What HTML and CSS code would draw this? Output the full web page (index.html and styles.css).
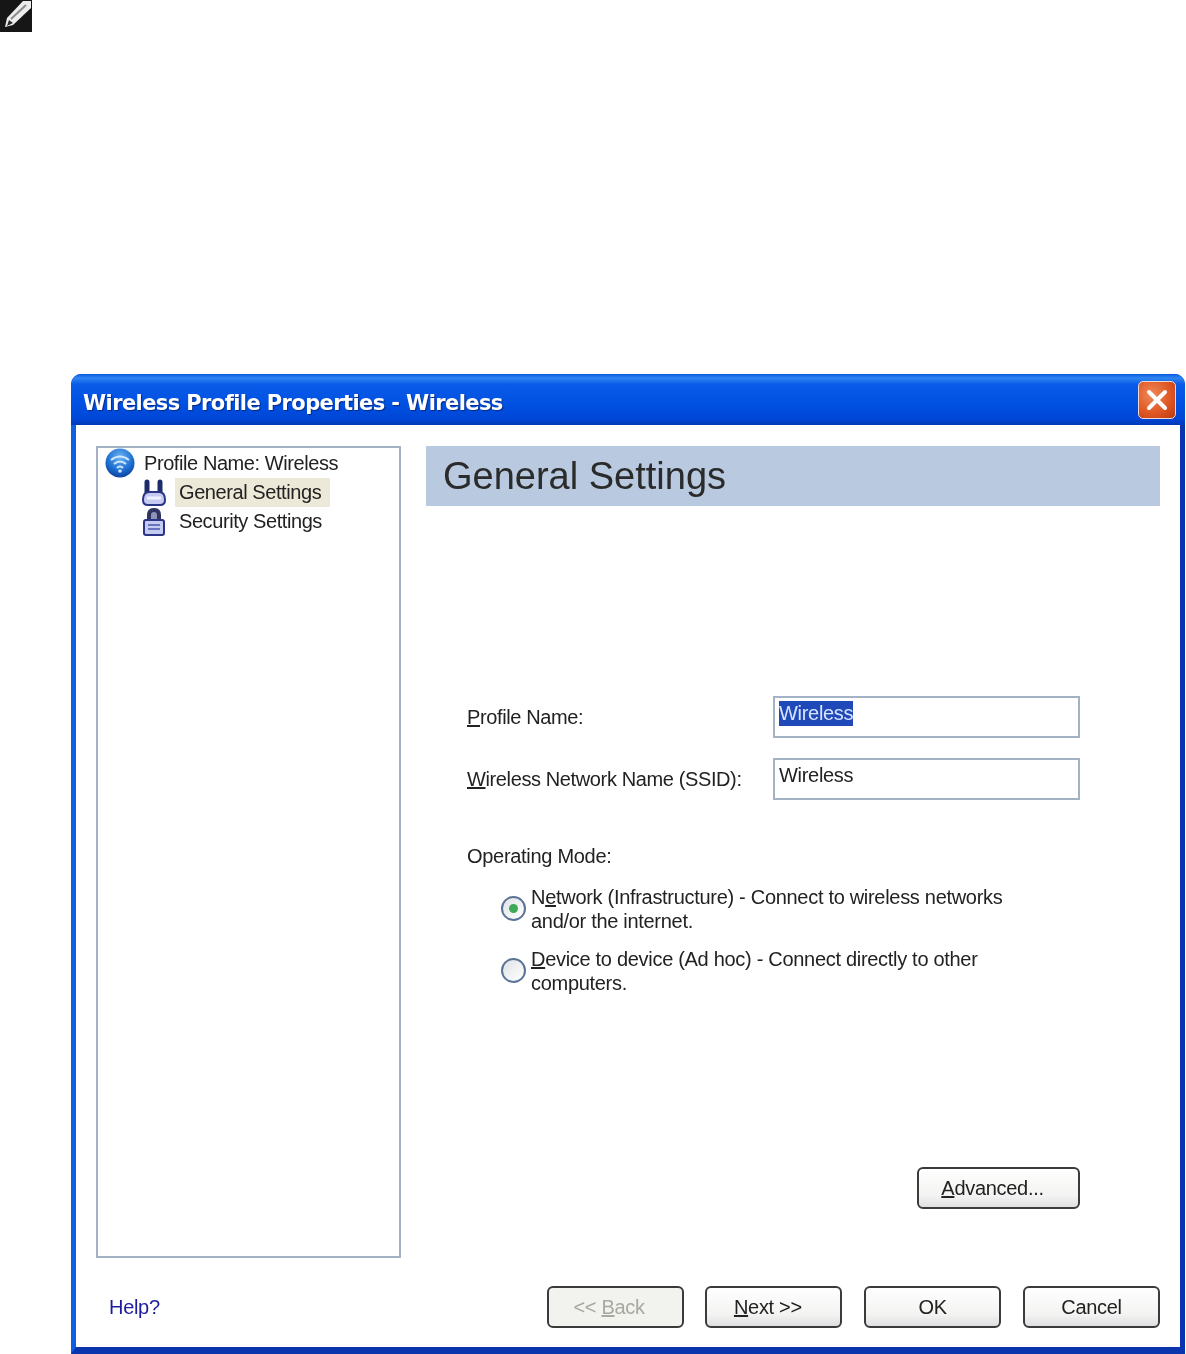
FILE: index.html
```html
<!DOCTYPE html>
<html>
<head>
    <title>Wireless Profile Properties</title>
    <link rel="stylesheet" href="styles.css">
</head>
<body>
    <svg class="note-icon" viewBox="0 0 32 32">
        <rect width="32" height="32" fill="#161616"/>
        <path d="M23 1 L31 1 L31 8 L13 25 L5 27 L7 18 Z" fill="#ededed"/>
        <path d="M11 19 L26 5" stroke="#8c8c8c" stroke-width="2" fill="none"/>
        <path d="M7 26 L9 20 L13 23 Z" fill="#2a2a2a"/>
    </svg>

    <div class="window">
        <div class="titlebar">
            <span class="title">Wireless Profile Properties - Wireless</span>
            <button class="close-btn" aria-label="Close">
                <svg viewBox="0 0 36 36" width="36" height="36">
                    <path d="M10 10 L26 26 M26 10 L10 26" stroke="#fff" stroke-width="4" stroke-linecap="round"/>
                </svg>
            </button>
        </div>

        <div class="client">
            <div class="main">
                <div class="tree">
                    <div class="tree-root">
                        <svg class="wifi-icon" viewBox="0 0 30 30">
                            <defs>
                                <radialGradient id="globe" cx="50%" cy="30%" r="75%">
                                    <stop offset="0" stop-color="#6db4f2"/>
                                    <stop offset="0.6" stop-color="#1c6fd0"/>
                                    <stop offset="1" stop-color="#0a3a96"/>
                                </radialGradient>
                            </defs>
                            <circle cx="15" cy="15" r="14.5" fill="url(#globe)"/>
                            <path d="M6 12 Q15 5 24 12 M9 16 Q15 11 21 16 M12 20 Q15 17 18 20" stroke="#cfe6fb" stroke-width="2" fill="none"/>
                            <circle cx="15" cy="23" r="1.8" fill="#cfe6fb"/>
                        </svg>
                        <span>Profile Name: Wireless</span>
                    </div>
                    <div class="tree-item">
                        <svg class="item-icon" viewBox="0 0 28 28">
                            <path d="M7 3 V14 M20 3 V14" stroke="#1d2a6b" stroke-width="5" stroke-linecap="round"/>
                            <path d="M3 21 Q3 13 9 13 H19 Q25 13 25 21 Q25 26 20 26 H8 Q3 26 3 21 Z" fill="#c6caf2" stroke="#2a3585" stroke-width="2"/>
                            <path d="M7 19 H21" stroke="#eef0ff" stroke-width="3"/>
                        </svg>
                        <span class="item-label selected">General Settings</span>
                    </div>
                    <div class="tree-item">
                        <svg class="item-icon" viewBox="0 0 28 28">
                            <path d="M9 13 V7 Q9 2 14 2 Q19 2 19 7 V13" stroke="#2f3560" stroke-width="4" fill="#8f93b8"/>
                            <rect x="4" y="12" width="20" height="15" rx="2" fill="#c6cbf4" stroke="#2a3585" stroke-width="2"/>
                            <path d="M8 17 H20 M8 21 H20" stroke="#6a73bd" stroke-width="2"/>
                        </svg>
                        <span class="item-label">Security Settings</span>
                    </div>
                </div>

                <div class="panel">
                    <h1 class="panel-heading">General Settings</h1>

                    <div class="form">
                        <div class="field-row">
                            <label class="field-label"><u>P</u>rofile Name:</label>
                            <div class="field"><span class="selection">Wireless</span></div>
                        </div>
                        <div class="field-row">
                            <label class="field-label"><u>W</u>ireless Network Name (SSID):</label>
                            <div class="field">Wireless</div>
                        </div>

                        <div class="mode-label">Operating Mode:</div>

                        <div class="radio-row">
                            <span class="radio checked"></span>
                            <span class="radio-text">N<u>e</u>twork (Infrastructure) - Connect to wireless networks<br>and/or the internet.</span>
                        </div>
                        <div class="radio-row">
                            <span class="radio"></span>
                            <span class="radio-text"><u>D</u>evice to device (Ad hoc) - Connect directly to other<br>computers.</span>
                        </div>

                        <div class="advanced-row">
                            <button class="btn btn-advanced btn-shifted"><u>A</u>dvanced...</button>
                        </div>
                    </div>
                </div>
            </div>

            <div class="footer">
                <a href="#" class="help-link">Help?</a>
                <div class="footer-buttons">
                    <button class="btn btn-shifted disabled">&lt;&lt; <u>B</u>ack</button>
                    <button class="btn btn-shifted"><u>N</u>ext &gt;&gt;</button>
                    <button class="btn">OK</button>
                    <button class="btn">Cancel</button>
                </div>
            </div>
        </div>
    </div>
</body>
</html>
```

FILE: styles.css
```css
* {
    box-sizing: border-box;
}

body {
    margin: 0;
    background-color: #fff;
    font-family: "Liberation Sans", Arial, sans-serif;
    color: #222;
}

.note-icon {
    display: block;
    width: 32px;
    height: 32px;
    filter: blur(0.7px);
}

.window {
    width: 1114px;
    height: 980px;
    margin: 342px 0 0 71px;
    border-radius: 10px 10px 0 0;
    background-color: #0a45d0;
    display: flex;
    flex-direction: column;
    overflow: hidden;
    filter: blur(0.6px);
}

.titlebar {
    height: 51px;
    flex: none;
    display: flex;
    align-items: center;
    justify-content: space-between;
    padding: 0 9px 0 12px;
    background: linear-gradient(to bottom, #0a5ae0 0%, #2f86f0 8%, #0a5ce8 20%, #0050e2 60%, #0046d6 88%, #0038b8 100%);
}

.title {
    padding-top: 6px;
    color: #fff;
    font-family: "DejaVu Sans", sans-serif;
    font-weight: bold;
    font-size: 21px;
    letter-spacing: -0.6px;
    text-shadow: 1px 1px 1px #0a2a80;
}

.close-btn {
    width: 38px;
    height: 38px;
    padding: 0;
    border: 1px solid #f0d8d0;
    border-radius: 5px;
    background: radial-gradient(circle at 35% 35%, #f0885a, #dd5420 60%, #b83a14);
    display: flex;
    align-items: center;
    justify-content: center;
}

.client {
    flex: 1;
    display: flex;
    flex-direction: column;
    padding: 21px 20px 19px;
    border-left: 5px solid #0f5fe6;
    border-right: 5px solid #0b34b0;
    border-bottom: 7px solid #0a35ac;
    background-color: #fff;
    font-size: 20px;
    letter-spacing: -0.3px;
}

.main {
    flex: 1;
    display: flex;
    gap: 25px;
}

.tree {
    width: 305px;
    height: 812px;
    padding: 0 7px;
    border: 2px solid #a3b2c4;
    letter-spacing: -0.42px;
}

.tree-root {
    display: flex;
    align-items: center;
    gap: 9px;
    height: 30px;
}

.wifi-icon {
    width: 30px;
    height: 30px;
    flex: none;
}

.tree-item {
    display: flex;
    align-items: center;
    height: 29px;
    margin-left: 35px;
    gap: 7px;
}

.item-icon {
    width: 28px;
    height: 28px;
    flex: none;
}

.item-label {
    padding: 0 9px 0 4px;
    height: 29px;
    line-height: 29px;
}

.item-label.selected {
    background-color: #ece9d8;
}

.panel {
    width: 734px;
}

.panel-heading {
    margin: 0;
    height: 60px;
    padding-left: 17px;
    line-height: 60px;
    background-color: #b8c9e0;
    color: #2b2b2b;
    font-size: 38px;
    font-weight: normal;
    letter-spacing: 0;
}

.form {
    padding: 190px 80px 0 41px;
}

.field-row {
    display: flex;
    justify-content: space-between;
    align-items: center;
    margin-bottom: 20px;
}

.field {
    width: 307px;
    height: 42px;
    padding: 3px 4px;
    border: 2px solid #a3b2c4;
    line-height: 25px;
}

.field-label {
    letter-spacing: -0.38px;
}

.selection {
    background-color: #1f49b8;
    color: #d8e4ff;
    display: inline-block;
}

.mode-label {
    margin-top: 43px;
    line-height: 26px;
}

.radio-row {
    display: flex;
    align-items: center;
    gap: 5px;
    margin: 16px 0 0 34px;
    line-height: 24px;
}

.radio-row + .radio-row {
    margin-top: 14px;
}

.radio {
    width: 25px;
    height: 25px;
    margin-top: -2px;
    flex: none;
    border: 2px solid #5a7396;
    border-radius: 50%;
    background: linear-gradient(135deg, #dfe3e6, #ffffff);
    display: flex;
    align-items: center;
    justify-content: center;
}

.radio.checked::after {
    content: "";
    width: 9px;
    height: 9px;
    border-radius: 50%;
    background-color: #3faa55;
}

.advanced-row {
    display: flex;
    justify-content: flex-end;
    margin-top: 172px;
}

.btn {
    width: 137px;
    height: 42px;
    padding: 0;
    border: 2px solid #3b3b3b;
    border-radius: 6px;
    background: linear-gradient(to bottom, #ffffff, #f3f3f2 70%, #dfdfe2);
    color: #222;
    font-family: inherit;
    font-size: 20px;
    letter-spacing: -0.3px;
}

.btn-advanced {
    width: 163px;
}

.btn-shifted {
    padding-right: 12px;
}

.btn.disabled {
    background: #f2f2ee;
    color: #a8a8a0;
}

.footer {
    display: flex;
    align-items: center;
    justify-content: space-between;
    padding-left: 13px;
}

.help-link {
    color: #1c1c9c;
    text-decoration: none;
}

.footer-buttons {
    display: flex;
    gap: 21.8px;
}
```
